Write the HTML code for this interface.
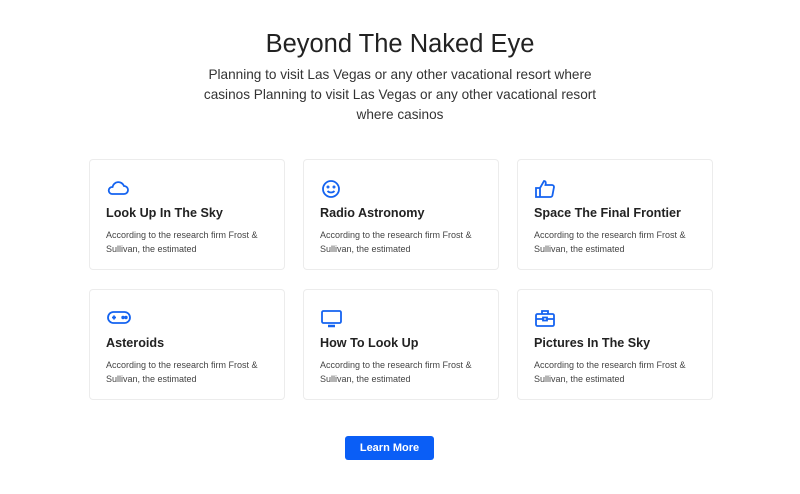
<html><head><style>
body{margin:0;width:800px;height:494px;background:#fff;font-family:"Liberation Sans",sans-serif;color:#222;position:relative;overflow:hidden}
h1{position:absolute;top:27px;left:0;width:800px;text-align:center;margin:0;font-size:25.5px;font-weight:normal;color:#222;line-height:34px}
.sub{position:absolute;top:65px;left:180px;width:440px;text-align:center;font-size:13.6px;line-height:20px;color:#333}
.card{position:absolute;width:196px;height:111px;border:1px solid #ececec;border-radius:4px;box-sizing:border-box}
.card svg{position:absolute;left:16px;top:19px}
.card h3{position:absolute;left:16px;top:46px;margin:0;font-size:12.6px;font-weight:bold;color:#222}
.card p{position:absolute;left:16px;top:69px;margin:0;font-size:9px;line-height:13.5px;color:#444;width:170px}
.btn{position:absolute;left:345px;top:436px;width:89px;height:24px;background:#0a5ef6;border-radius:3px;color:#fff;font-size:11px;font-weight:bold;text-align:center;line-height:24px}
</style></head><body>
<h1>Beyond The Naked Eye</h1>
<div class="sub">Planning to visit Las Vegas or any other vacational resort where<br>casinos Planning to visit Las Vegas or any other vacational resort<br>where casinos</div>

<div class="card" style="left:89px;top:159px"><svg width="24" height="18" viewBox="0 0 24 18" fill="none" stroke="#1463f0" stroke-width="1.8"><path d="M6 15h12a4 4 0 0 0 0-8 6 6 0 0 0-11.5 1A3.5 3.5 0 0 0 6 15z"/></svg><h3>Look Up In The Sky</h3><p>According to the research firm Frost &amp; Sullivan, the estimated</p></div>
<div class="card" style="left:303px;top:159px"><svg width="22" height="20" viewBox="0 0 22 20" fill="none" stroke="#1463f0" stroke-width="1.8"><circle cx="11" cy="10" r="8"/><circle cx="8" cy="8" r=".6"/><circle cx="14" cy="8" r=".6"/><path d="M7.5 12a4.5 4 0 0 0 7 0"/></svg><h3>Radio Astronomy</h3><p>According to the research firm Frost &amp; Sullivan, the estimated</p></div>
<div class="card" style="left:517px;top:159px"><svg width="24" height="20" viewBox="0 0 24 20" fill="none" stroke="#1463f0" stroke-width="1.8"><path d="M2 9h4v9H2zM6 9l4-7c2 0 2 2 1.5 4H18a2 2 0 0 1 2 2l-1.5 8a2 2 0 0 1-2 2H6"/></svg><h3>Space The Final Frontier</h3><p>According to the research firm Frost &amp; Sullivan, the estimated</p></div>

<div class="card" style="left:89px;top:289px"><svg width="26" height="18" viewBox="0 0 26 18" fill="none" stroke="#1463f0" stroke-width="1.8"><rect x="2" y="3" width="22" height="11" rx="5.5"/><path d="M6 8.5h4M8 6.5v4"/><circle cx="17" cy="8.5" r=".8"/><circle cx="20" cy="8.5" r=".8"/></svg><h3>Asteroids</h3><p>According to the research firm Frost &amp; Sullivan, the estimated</p></div>
<div class="card" style="left:303px;top:289px"><svg width="24" height="20" viewBox="0 0 24 20" fill="none" stroke="#1463f0" stroke-width="1.8"><rect x="2" y="2" width="19" height="12" rx="1.5"/><path d="M8 17h7" stroke-width="2.5"/></svg><h3>How To Look Up</h3><p>According to the research firm Frost &amp; Sullivan, the estimated</p></div>
<div class="card" style="left:517px;top:289px"><svg width="24" height="20" viewBox="0 0 24 20" fill="none" stroke="#1463f0" stroke-width="1.8"><rect x="2" y="5" width="18" height="12" rx="1.5"/><path d="M8 5V2h6v3M2 10h18"/><rect x="9" y="8.5" width="4" height="3" fill="#fff"/></svg><h3>Pictures In The Sky</h3><p>According to the research firm Frost &amp; Sullivan, the estimated</p></div>

<div class="btn">Learn More</div>
</body></html>
